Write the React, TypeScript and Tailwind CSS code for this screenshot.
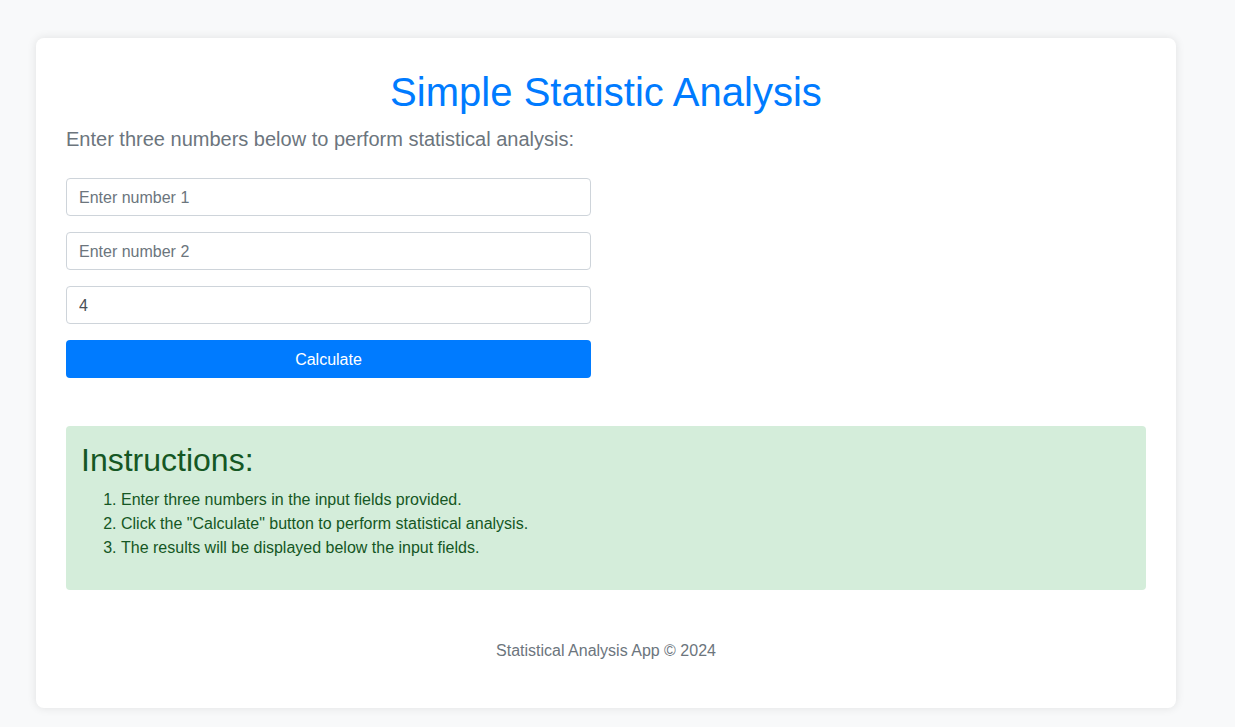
import React, { useState } from 'react';

export default function App() {
  const [nums, setNums] = useState(['', '', '4']);

  const update = (i: number, v: string) => {
    const next = [...nums];
    next[i] = v;
    setNums(next);
  };

  return (
    <div className="min-h-[727px] w-full bg-[#f8f9fa] pt-[38px] pb-[19px] font-['Liberation_Sans',Arial,sans-serif] text-[#212529]">
      <div className="ml-[36px] w-[1140px] rounded-lg bg-white px-[30px] pt-[20px] pb-[30px] shadow-[0_0_10px_rgba(0,0,0,0.1)]">
        {/* Header */}
        <h1 className="mt-[10px] mb-[8px] text-center text-[40px] leading-[48px] tracking-[0.02px] text-[#007bff]">
          Simple Statistic Analysis
        </h1>
        <p className="mb-[24px] text-[20px] leading-[30px] text-[#6c757d]">
          Enter three numbers below to perform statistical analysis:
        </p>

        {/* Form */}
        <div className="flex w-[525px] flex-col gap-4">
          {nums.map((n, i) => (
            <input
              key={i}
              type="number"
              value={n}
              onChange={(e) => update(i, e.target.value)}
              placeholder={`Enter number ${i + 1}`}
              className="h-[38px] w-full rounded border border-[#ced4da] px-3 pt-[8px] pb-[6px] text-base leading-[22px] text-[#495057] placeholder:text-[#6c757d] outline-none"
            />
          ))}
          <button className="h-[38px] w-full rounded bg-[#007bff] pt-[8px] pb-[6px] text-base leading-6 text-white">
            Calculate
          </button>
        </div>

        {/* Instructions */}
        <div className="mt-[48px] rounded bg-[#d4edda] px-[15px] pt-[15px] pb-[15px] text-[#155724]">
          <h2 className="mb-[9px] text-[32px] leading-[38px]">Instructions:</h2>
          <ol className="mb-[15px] list-decimal pl-10 text-base leading-6">
            <li>Enter three numbers in the input fields provided.</li>
            <li>Click the "Calculate" button to perform statistical analysis.</li>
            <li>The results will be displayed below the input fields.</li>
          </ol>
        </div>

        {/* Footer */}
        <p className="mt-[49px] mb-[15px] text-center text-base leading-6 text-[#6c757d]">
          Statistical Analysis App © 2024
        </p>
      </div>
    </div>
  );
}
